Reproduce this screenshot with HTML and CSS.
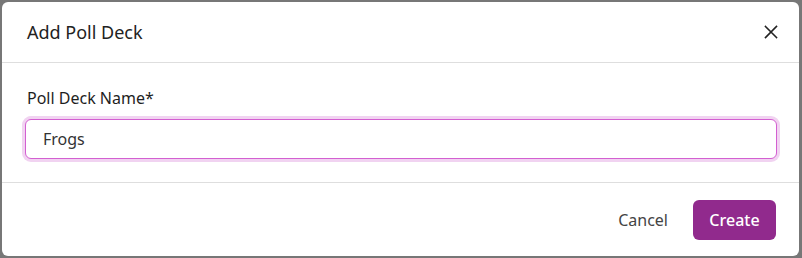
FILE: index.html
```html
<!DOCTYPE html>
<html lang="en">
<head>
<meta charset="utf-8">
<title>Add Poll Deck</title>
<link rel="stylesheet" href="styles.css">
</head>
<body>
<div class="modal" role="dialog" aria-labelledby="modal-title">
  <header class="modal-header">
    <h2 id="modal-title" class="modal-title">Add Poll Deck</h2>
    <button class="close-btn" aria-label="Close">
      <svg width="14" height="14" viewBox="0 0 14 14"><path d="M1.5 1.5 L12.5 12.5 M12.5 1.5 L1.5 12.5" stroke="#222" stroke-width="1.6" fill="none" stroke-linecap="square"/></svg>
    </button>
  </header>
  <div class="modal-body">
    <label class="field-label" for="deck-name">Poll Deck Name*</label>
    <input id="deck-name" class="text-input" type="text" value="Frogs">
  </div>
  <footer class="modal-footer">
    <button class="btn-cancel">Cancel</button>
    <button class="btn-create">Create</button>
  </footer>
</div>
</body>
</html>
```

FILE: styles.css
```css
html, body {
  margin: 0;
  padding: 0;
}
body {
  background: #777777;
  font-family: "Noto Sans", "Open Sans", sans-serif;
  padding: 2px 3px 2px 2px;
  overflow: hidden;
  height: 258px;
  box-sizing: border-box;
}
.modal {
  background: #ffffff;
  border-radius: 6px;
  height: 254px;
  display: flex;
  flex-direction: column;
  box-sizing: border-box;
}
.modal-header {
  height: 60px;
  display: flex;
  align-items: center;
  justify-content: space-between;
  padding: 0 21px 0 25px;
  border-bottom: 1px solid #dedede;
}
.modal-title {
  margin: 0;
  font-size: 18px;
  font-weight: 400;
  color: #222222;
}
.close-btn {
  background: none;
  border: 0;
  padding: 0;
  width: 14px;
  height: 14px;
  display: flex;
  align-items: center;
  justify-content: center;
  cursor: pointer;
}
.modal-body {
  padding: 24px 22px 23px 23px;
  border-bottom: 1px solid #dedede;
}
.field-label {
  display: block;
  font-size: 16px;
  font-weight: 400;
  color: #1e1e1e;
  margin: 0 0 10px 2px;
  line-height: 22px;
}
.text-input {
  display: block;
  width: 100%;
  height: 40px;
  box-sizing: border-box;
  border: 1px solid #d35fd1;
  border-radius: 6px;
  box-shadow: 0 0 0 3px #f1d3f1;
  padding: 0 17px;
  font-family: "Noto Sans", "Open Sans", sans-serif;
  font-size: 16px;
  color: #333333;
  outline: none;
}
.modal-footer {
  flex: 1;
  display: flex;
  align-items: center;
  justify-content: flex-end;
  gap: 8px;
  padding: 0 23px 0 0;
}
.btn-cancel {
  background: none;
  border: 0;
  font-family: "Noto Sans", "Open Sans", sans-serif;
  font-size: 16px;
  color: #444444;
  padding: 0 17px;
  height: 40px;
  cursor: pointer;
}
.btn-create {
  background: #912a8d;
  color: #ffffff;
  border: 0;
  border-radius: 6px;
  font-family: "Noto Sans", "Open Sans", sans-serif;
  font-size: 16px;
  font-weight: 500;
  height: 40px;
  width: 83px;
  cursor: pointer;
}
```
